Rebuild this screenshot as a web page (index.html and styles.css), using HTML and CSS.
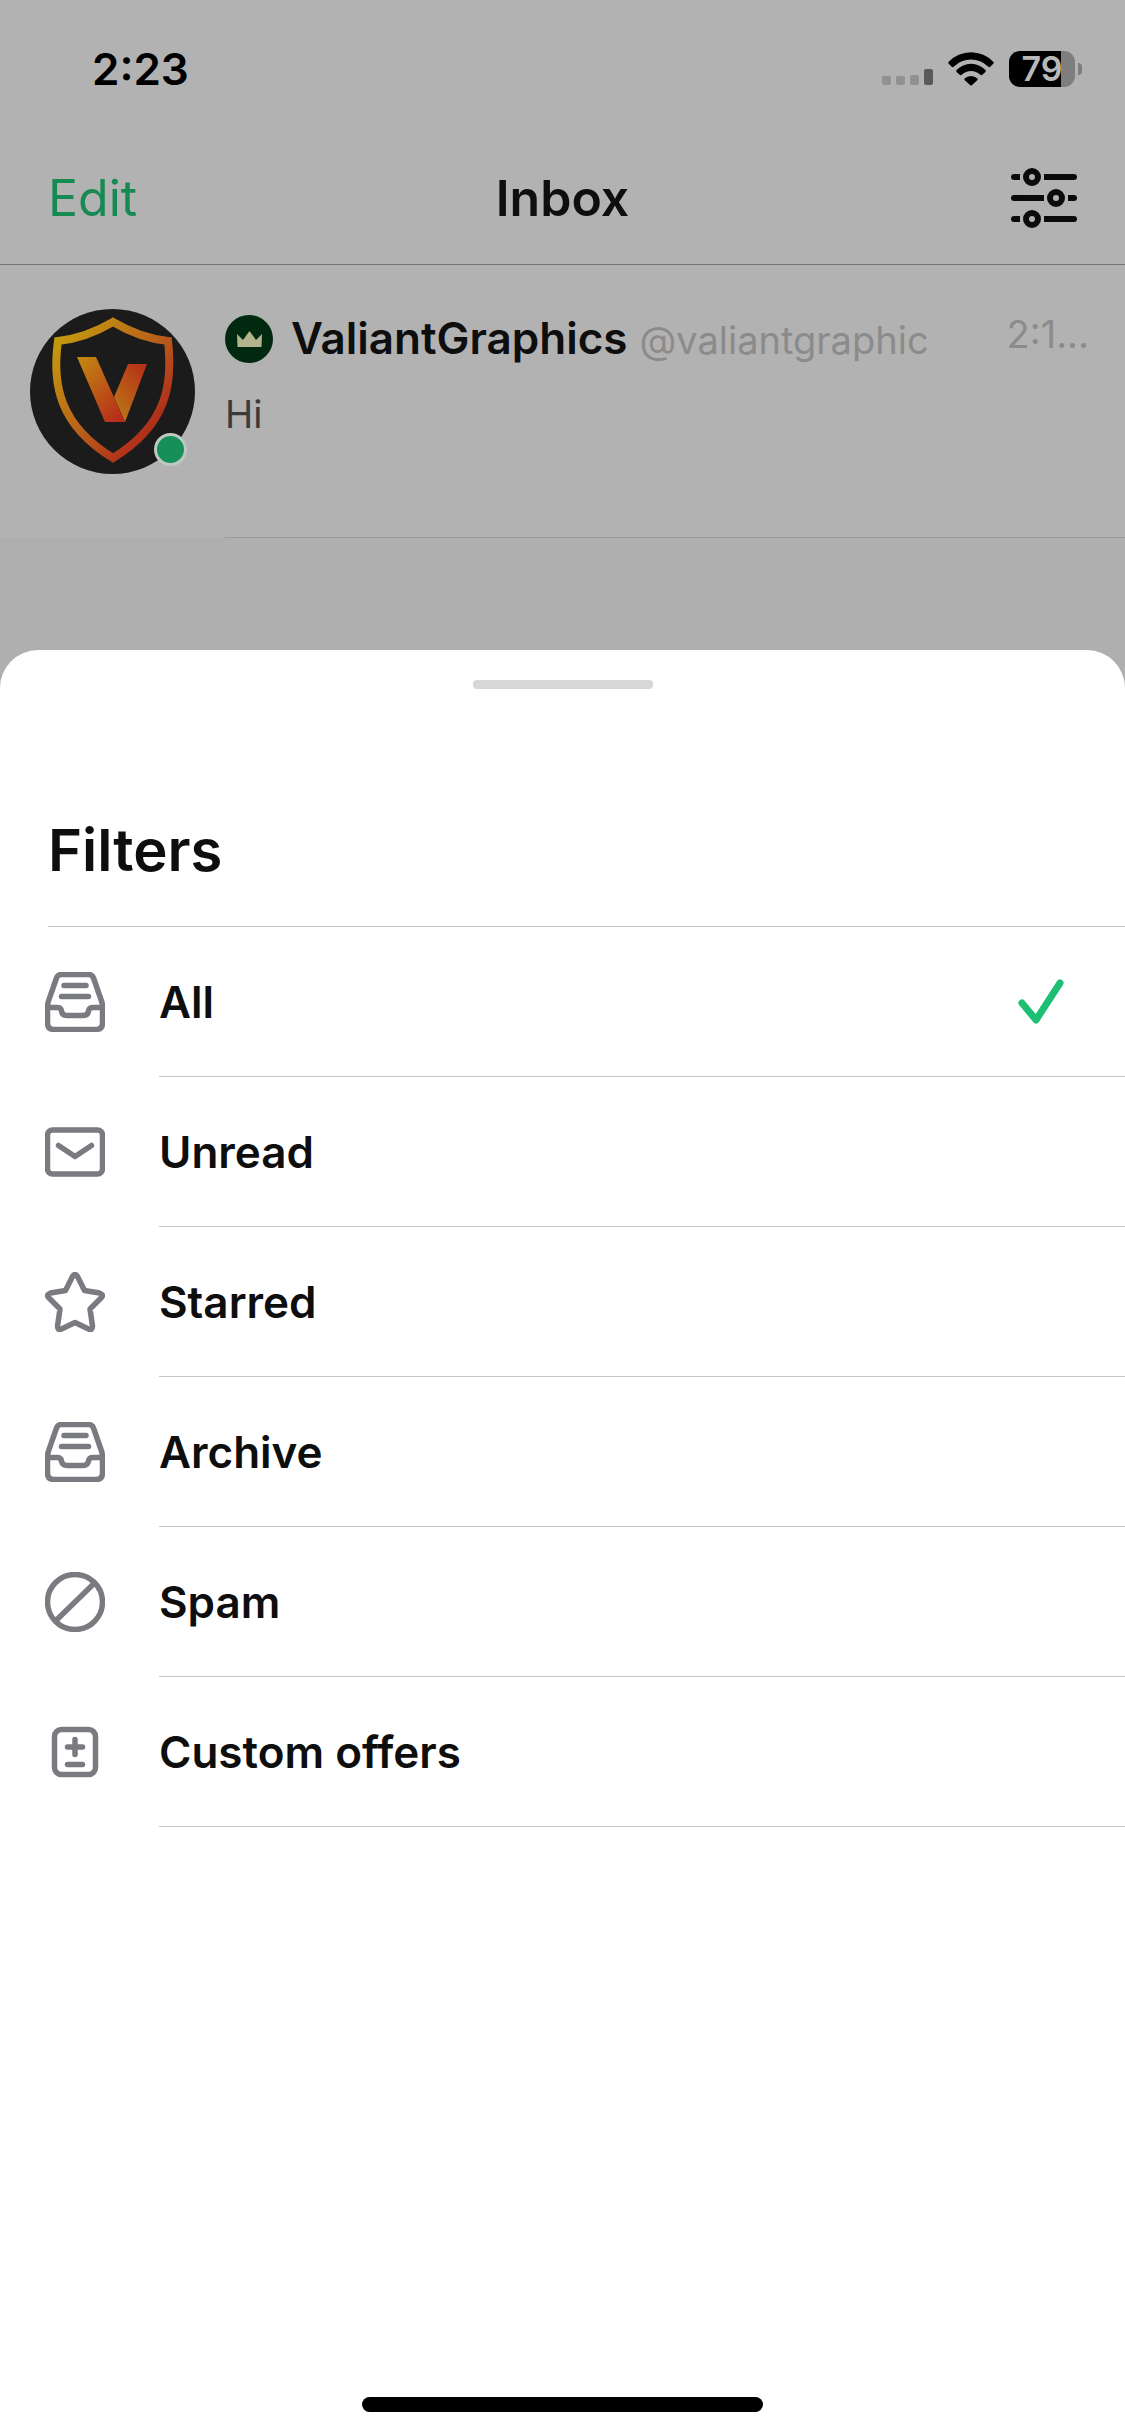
FILE: index.html
```html
<!DOCTYPE html>
<html lang="en">
<head>
    <meta charset="UTF-8">
    <meta name="viewport" content="width=device-width, initial-scale=1.0">
    <title>Inbox</title>
    <link rel="stylesheet" href="styles.css">
</head>
<body>
    <!-- Inbox, dimmed behind the sheet -->
    <div class="inbox">
        <div class="status-bar">
            <span class="clock">2:23</span>
            <div class="status-icons">
                <svg class="signal" width="51" height="36" viewBox="0 0 51 36">
                    <g fill="#919191">
                        <rect x="0" y="25" width="9" height="9" rx="2"/>
                        <rect x="14" y="25" width="9" height="9" rx="2"/>
                        <rect x="28" y="24" width="9" height="10" rx="2"/>
                    </g>
                    <rect x="42" y="18" width="9" height="16" rx="2" fill="#5a5a5a"/>
                </svg>
                <svg class="wifi" width="46" height="36" viewBox="0 0 46 36">
                    <path d="M0.5 11 A31 31 0 0 1 45.5 11 Q46 12 45 13 L42 16 Q41 16.5 40 15.5 A24 24 0 0 0 6 15.5 Q5 16.5 4 16 L1 13 Q0 12 0.5 11Z"/>
                    <path d="M8.5 19 A20 20 0 0 1 37.5 19 Q38 20 37.5 21 L34 24 Q33 24.5 32 23.5 A13 13 0 0 0 14 23.5 Q13 24.5 12 24 L8.5 21 Q8 20 8.5 19Z"/>
                    <path d="M16.5 27.5 A9.5 9.5 0 0 1 29.5 27.5 Q30 28.5 29 29.5 L24 34 Q23 35 22 34 L17 29.5 Q16 28.5 16.5 27.5Z"/>
                </svg>
                <div class="battery"><span class="battery-body">79</span><span class="battery-tip"></span></div>
            </div>
        </div>

        <header class="nav">
            <button class="edit" type="button">Edit</button>
            <h1>Inbox</h1>
            <button class="filter-button" type="button" aria-label="Filters">
                <svg width="66" height="60" viewBox="0 0 66 60" fill="none" stroke="#0b0b0b" stroke-width="6">
                    <path d="M3 9h6M33 9h30M3 30h30M57 30h6M3 51h6M33 51h30"/>
                    <g fill="#0b0b0b" stroke="none">
                        <circle cx="3" cy="9" r="3"/><circle cx="63" cy="9" r="3"/>
                        <circle cx="3" cy="30" r="3"/><circle cx="63" cy="30" r="3"/>
                        <circle cx="3" cy="51" r="3"/><circle cx="63" cy="51" r="3"/>
                    </g>
                    <circle cx="21" cy="9" r="6"/>
                    <circle cx="45" cy="30" r="6"/>
                    <circle cx="21" cy="51" r="6"/>
                </svg>
            </button>
        </header>

        <div class="conversation">
            <div class="avatar">
                <svg width="165" height="165" viewBox="0 0 165 165">
                    <defs>
                        <linearGradient id="shield" x1="0" y1="0" x2="1" y2="1">
                            <stop offset="0.1" stop-color="#c3960f"/>
                            <stop offset="0.5" stop-color="#b9611a"/>
                            <stop offset="0.8" stop-color="#b0301a"/>
                        </linearGradient>
                        <linearGradient id="bandLeft" x1="0" y1="0" x2="0.8" y2="1">
                            <stop offset="0" stop-color="#c28b12"/>
                            <stop offset="1" stop-color="#b82d1a"/>
                        </linearGradient>
                        <linearGradient id="bandRight" x1="1" y1="0" x2="0.3" y2="1">
                            <stop offset="0" stop-color="#b52c18"/>
                            <stop offset="1" stop-color="#bb7417"/>
                        </linearGradient>
                    </defs>
                    <circle cx="82.5" cy="82.5" r="82.5" fill="#1b1b1b"/>
                    <path d="M83 13 Q110 29 138 32 C143 75 137 116 83 149 C29 116 22 75 28 32 Q56 29 83 13Z" fill="none" stroke="url(#shield)" stroke-width="8"/>
                    <path d="M98 55 H117 L95 113 L84 88Z" fill="url(#bandRight)"/>
                    <path d="M47 48 H66 L95 113 H75Z" fill="url(#bandLeft)"/>
                </svg>
                <span class="online"></span>
            </div>
            <div class="conversation-body">
                <div class="conversation-text">
                    <div class="sender">
                        <svg class="badge" width="48" height="48" viewBox="0 0 48 48">
                            <circle cx="24" cy="24" r="24" fill="#00290f"/>
                            <path d="M12 19 L18 25 L24.5 16 L31 25 L37 19 L36.5 32 H12.5Z" fill="#b3b38c"/>
                        </svg>
                        <span class="name">ValiantGraphics</span>
                        <span class="handle">@valiantgraphic</span>
                    </div>
                    <p class="message">Hi</p>
                </div>
                <span class="time">2:1...</span>
            </div>
        </div>
    </div>

    <!-- Filter sheet -->
    <main class="sheet">
        <div class="grabber"></div>
        <h2>Filters</h2>
        <form class="filters">
            <label class="filter">
                <input type="radio" name="filter" value="all" checked>
                <svg class="icon" viewBox="0 0 60 60">
                    <path d="M16 2.5 H44 Q47 2.5 48.5 6 L56.5 29 Q57.5 32 57.5 35 V51 Q57.5 57.5 51 57.5 H9 Q2.5 57.5 2.5 51 V35 Q2.5 32 3.5 29 L11.5 6 Q13 2.5 16 2.5Z"/>
                    <path d="M3 35.5 H12 Q16 35.5 16.5 39 Q17 43.5 22 43.5 H38 Q43 43.5 43.5 39 Q44 35.5 48 35.5 H57M19 13.5 H41M16.5 24.5 H43.5"/>
                </svg>
                <span class="filter-name">All <svg class="check" viewBox="0 0 60 60"><path d="M11 31 L25 48 L49 11"/></svg></span>
            </label>
            <label class="filter">
                <input type="radio" name="filter" value="unread">
                <svg class="icon" viewBox="0 0 60 60">
                    <rect x="2.5" y="8" width="55" height="44" rx="5"/>
                    <path d="M13.5 23.5 L30 34.5 L46.5 23.5"/>
                </svg>
                <span class="filter-name">Unread <svg class="check" viewBox="0 0 60 60"><path d="M11 31 L25 48 L49 11"/></svg></span>
            </label>
            <label class="filter">
                <input type="radio" name="filter" value="starred">
                <svg class="icon" viewBox="0 0 60 60">
                    <path d="M27.5 4.5 Q30 0.5 32.5 4.5 L39.5 18.5 L54.5 21 Q59 22.5 56.5 25.5 L45 37 L47.5 54 Q47.5 59 43.5 57 L30 50.5 L16.5 57 Q12.5 59 12.5 54 L15 37 L3.5 25.5 Q1 22.5 5.5 21 L20.5 18.5Z"/>
                </svg>
                <span class="filter-name">Starred <svg class="check" viewBox="0 0 60 60"><path d="M11 31 L25 48 L49 11"/></svg></span>
            </label>
            <label class="filter">
                <input type="radio" name="filter" value="archive">
                <svg class="icon" viewBox="0 0 60 60">
                    <path d="M16 2.5 H44 Q47 2.5 48.5 6 L56.5 29 Q57.5 32 57.5 35 V51 Q57.5 57.5 51 57.5 H9 Q2.5 57.5 2.5 51 V35 Q2.5 32 3.5 29 L11.5 6 Q13 2.5 16 2.5Z"/>
                    <path d="M3 35.5 H12 Q16 35.5 16.5 39 Q17 43.5 22 43.5 H38 Q43 43.5 43.5 39 Q44 35.5 48 35.5 H57M19 13.5 H41M16.5 24.5 H43.5"/>
                </svg>
                <span class="filter-name">Archive <svg class="check" viewBox="0 0 60 60"><path d="M11 31 L25 48 L49 11"/></svg></span>
            </label>
            <label class="filter">
                <input type="radio" name="filter" value="spam">
                <svg class="icon" viewBox="0 0 60 60">
                    <circle cx="30" cy="30" r="27.5"/>
                    <path d="M11 48.5 L49 11.5"/>
                </svg>
                <span class="filter-name">Spam <svg class="check" viewBox="0 0 60 60"><path d="M11 31 L25 48 L49 11"/></svg></span>
            </label>
            <label class="filter">
                <input type="radio" name="filter" value="offers">
                <svg class="icon" viewBox="0 0 60 60">
                    <rect x="9.5" y="7.5" width="41" height="45" rx="7"/>
                    <path d="M22.5 25 H37.5M30 17.5 V32.5M22.5 42.5 H37.5"/>
                </svg>
                <span class="filter-name">Custom offers <svg class="check" viewBox="0 0 60 60"><path d="M11 31 L25 48 L49 11"/></svg></span>
            </label>
        </form>
        <div class="home-indicator"></div>
    </main>
</body>
</html>
```
FILE: styles.css
```css
* {
    box-sizing: border-box;
}
body {
    margin: 0;
    min-height: 100vh;
    display: flex;
    flex-direction: column;
    font-family: Inter, "Liberation Sans", sans-serif;
    font-weight: 600;
    color: #0e0e0f;
    background: #afafaf;
}
svg {
    display: block;
    flex-shrink: 0;
}
h1, h2, p {
    margin: 0;
    font-weight: 600;
}
button {
    padding: 0;
    border: none;
    background: none;
    font-family: inherit;
    cursor: pointer;
}

/* Inbox */
.inbox {
    padding-bottom: 112px;
}
.status-bar {
    display: flex;
    justify-content: space-between;
    align-items: center;
    height: 132px;
    padding: 6px 43px 0 92px;
    background: #b2b2b2;
    color: #000;
}
.clock {
    font-size: 44px;
}
.status-icons {
    display: flex;
    align-items: center;
    gap: 15px;
}
.battery {
    display: flex;
    align-items: center;
    gap: 3px;
}
.battery-body {
    width: 66px;
    border-radius: 11px;
    background: linear-gradient(to right, #000 79%, #7e7e7e 79%);
    color: #b9b9b9;
    font-size: 34px;
    line-height: 36px;
    text-align: center;
}
.battery-tip {
    width: 4px;
    height: 12px;
    border-radius: 0 4px 4px 0;
    background: #7e7e7e;
}
.nav {
    display: grid;
    grid-template-columns: 1fr auto 1fr;
    align-items: center;
    height: 133px;
    padding: 0 48px;
    background: #b2b2b2;
    border-bottom: 1px solid #747474;
}
.nav h1 {
    font-size: 50px;
}
.edit {
    justify-self: start;
    color: #178a54;
    font-size: 50px;
}
.filter-button {
    justify-self: end;
}
.conversation {
    display: flex;
    gap: 30px;
    padding: 44px 0 0 30px;
    background: #b2b2b2;
}
.avatar {
    position: relative;
    width: 165px;
    height: 165px;
}
.online {
    position: absolute;
    right: 8px;
    bottom: 8px;
    width: 33px;
    height: 33px;
    border: 3px solid #bdc8c2;
    border-radius: 50%;
    background: #178f58;
}
.conversation-body {
    flex: 1;
    display: flex;
    justify-content: space-between;
    padding: 0 36px 93px 0;
    border-bottom: 1px solid #9b9b9b;
}
.sender {
    display: flex;
    align-items: baseline;
    height: 60px;
    line-height: 58px;
}
.badge {
    align-self: center;
    margin-right: 18px;
}
.name {
    margin-right: 12px;
    font-size: 44px;
}
.handle, .time {
    color: #8b8b8b;
    font-size: 38px;
    font-weight: 400;
}
.time {
    line-height: 50px;
}
.message {
    margin-top: 15px;
    color: #3a3a3a;
    font-size: 38px;
    font-weight: 400;
    line-height: 60px;
}

/* Sheet */
.sheet {
    flex: 1;
    display: flex;
    flex-direction: column;
    padding: 30px 0 24px;
    border-radius: 38px 38px 0 0;
    background: #fff;
}
.grabber {
    width: 180px;
    height: 9px;
    margin: 0 auto;
    border-radius: 4px;
    background: #d7d7d7;
}
.sheet h2 {
    margin-left: 48px;
    padding: 121px 0 36px;
    border-bottom: 1px solid #c5c5c7;
    font-size: 58px;
    line-height: 80px;
}
.filters {
    margin-bottom: auto;
}
.filter {
    position: relative;
    display: flex;
    align-items: center;
    gap: 54px;
    padding-left: 45px;
    cursor: pointer;
}
.filter input {
    position: absolute;
    opacity: 0;
}
.icon {
    width: 60px;
    height: 60px;
    fill: none;
    stroke: #7a7b81;
    stroke-width: 5.5px;
    stroke-linecap: round;
    stroke-linejoin: round;
}
.filter-name {
    flex: 1;
    display: flex;
    align-items: center;
    justify-content: space-between;
    height: 150px;
    padding-right: 54px;
    border-bottom: 1px solid #c5c5c7;
    font-size: 44px;
}
.check {
    display: none;
    width: 60px;
    height: 60px;
    fill: none;
    stroke: #1dbf73;
    stroke-width: 7px;
    stroke-linecap: round;
    stroke-linejoin: round;
}
.filter input:checked ~ .filter-name .check {
    display: block;
}
.home-indicator {
    width: 401px;
    height: 15px;
    margin: 0 auto;
    border-radius: 8px;
    background: #000;
}
```
